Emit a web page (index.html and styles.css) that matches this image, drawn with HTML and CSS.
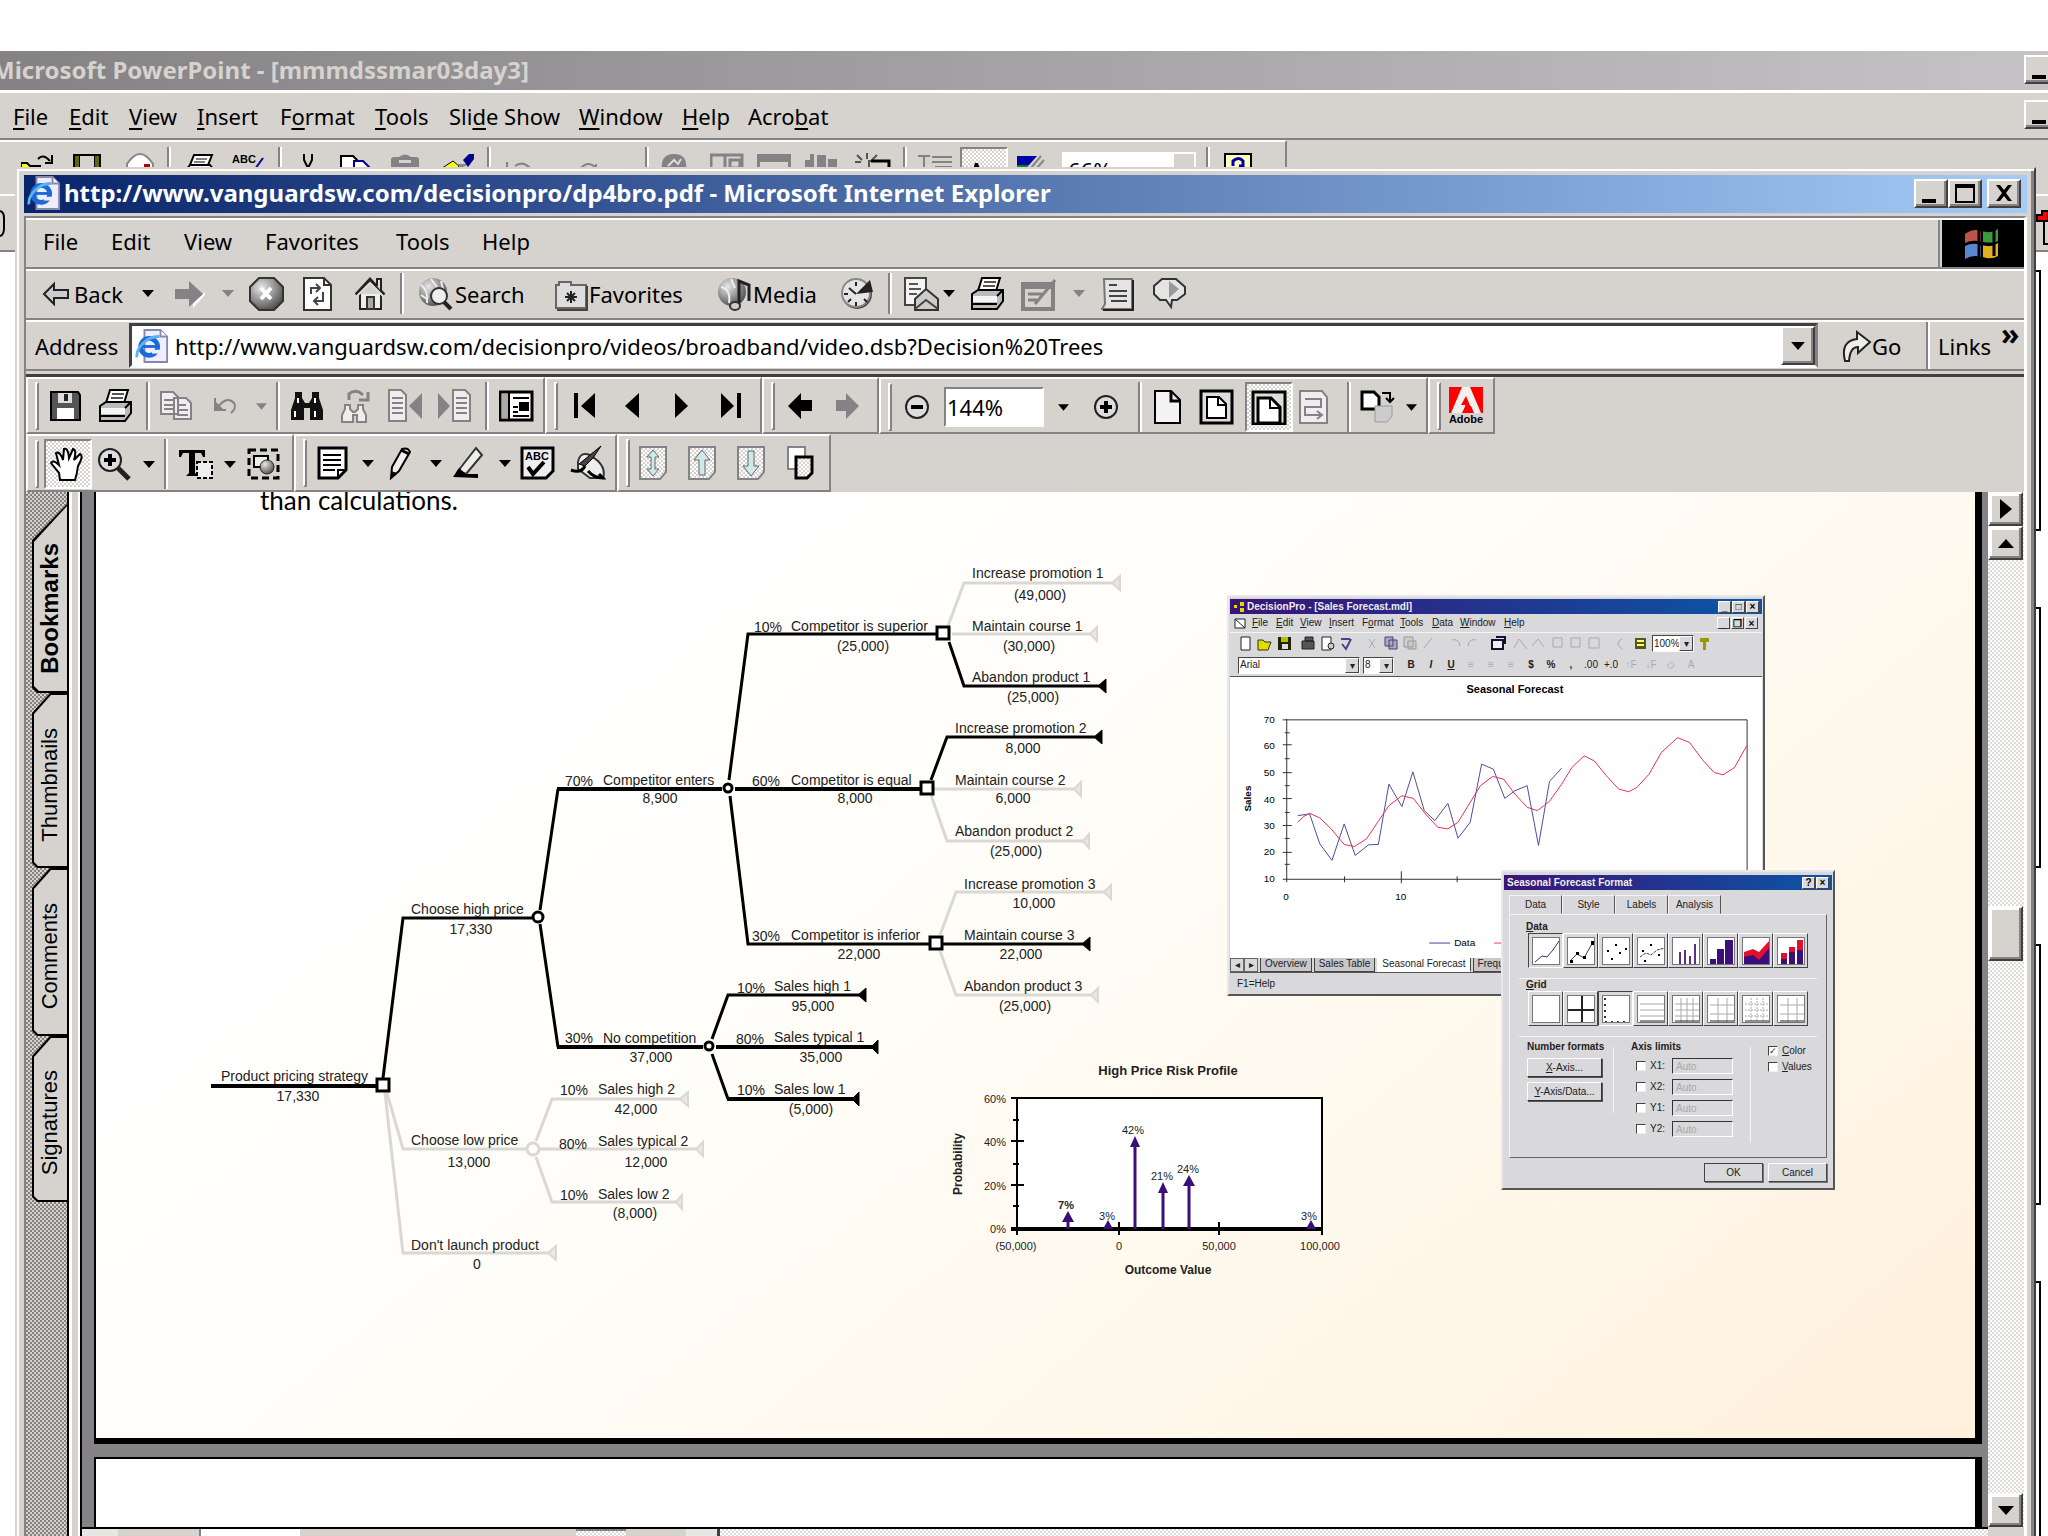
FILE: index.html
```html
<!DOCTYPE html>
<html lang="en">
<head>
<meta charset="utf-8">
<title>Desktop</title>
<link rel="stylesheet" href="styles.css">
</head>
<body>
<svg width="0" height="0" class="defs" aria-hidden="true">
<defs>
<linearGradient id="g" x1="0" y1="0" x2="1" y2="1"><stop offset="0" stop-color="#fff"/><stop offset="1" stop-color="#777"/></linearGradient>
<radialGradient id="ball" cx=".35" cy=".3" r=".8"><stop offset="0" stop-color="#e8e8e8"/><stop offset="1" stop-color="#444"/></radialGradient>
<pattern id="dots" width="4" height="4" patternUnits="userSpaceOnUse"><rect width="4" height="4" fill="#fff"/><path d="M0 0h2v2H0zM2 2h2v2H2z" fill="#d6d3ce"/></pattern>
<symbol id="caret" viewBox="0 0 12 7"><path d="M0 0h12L6 7z" fill="currentColor"/></symbol>
<symbol id="printer" viewBox="0 0 35 34"><path d="M12 1h18l-4 13H8z" fill="#fff" stroke="#000" stroke-width="2"/><path d="M14 5h12M13 9h12" stroke="#555" stroke-width="2"/><path d="M2 17l6-4h25v11l-6 8H2z" fill="#bbb" stroke="#000" stroke-width="2"/><path d="M3 19h24v6H3z" fill="#f4f4f4"/><path d="M2 27h25M27 19l6-6" stroke="#000" stroke-width="2"/></symbol>
<symbol id="ie" viewBox="0 0 34 36"><path d="M9 1h17l7 7v27H9z" fill="#eef" stroke="#88a" stroke-width="2"/><path d="M26 1v7h7" fill="#fff" stroke="#88a" stroke-width="2"/><circle cx="14" cy="19" r="9" fill="none" stroke="#1a6ad8" stroke-width="5"/><path d="M7 20h17v-3H7z" fill="#1a6ad8"/><path d="M17 22h9v4h-9z" fill="#eef"/><path d="M1 30C0 20 12 7 25 8" fill="none" stroke="#5bb4f0" stroke-width="3"/></symbol>
</defs>
</svg>

<main class="ppt">
  <header class="ppt-title"><h1>Microsoft PowerPoint - [mmmdssmar03day3]</h1><button class="win-btn" aria-label="Minimize"><span class="g-min"></span></button></header>
  <nav class="ppt-menu">
    <a href="#"><u>F</u>ile</a><a href="#"><u>E</u>dit</a><a href="#"><u>V</u>iew</a><a href="#"><u>I</u>nsert</a><a href="#">F<u>o</u>rmat</a><a href="#"><u>T</u>ools</a><a href="#">Sli<u>d</u>e Show</a><a href="#"><u>W</u>indow</a><a href="#"><u>H</u>elp</a><a href="#">Acro<u>b</u>at</a>
    <button class="win-btn" aria-label="Minimize document"><span class="g-min"></span></button>
  </nav>
  <div class="ppt-tools">
    <button aria-label="Open"><svg width="32" height="18"><path d="M0 17v-6h6l3 3h10v4" fill="#ff0" stroke="#000" stroke-width="2"/><path d="M17 7q5-6 12 2M31 3v8h-7" fill="none" stroke="#000" stroke-width="2"/></svg></button>
    <button aria-label="Save"><svg width="32" height="18"><path d="M1 2h28v16H1z" fill="#000"/><path d="M3 4h4v14H3zM23 4h4v14h-4z" fill="#660"/><path d="M8 4h14v12H8z" fill="#d6d3ce"/></svg></button>
    <button aria-label="Mail"><svg width="30" height="18"><path d="M1 18V12Q14-8 27 12v6" fill="#fff" stroke="#888" stroke-width="2"/><path d="M18 12h6v6h-6z" fill="#b00"/></svg></button>
    <i class="vsep"></i>
    <button aria-label="Print"><svg width="30" height="18"><path d="M8 3h18l-4 10H4zM0 18l4-5h20l4 5" fill="#fff" stroke="#000" stroke-width="2"/><path d="M10 7h11M8 10h11" stroke="#000"/></svg></button>
    <button aria-label="Spelling"><svg width="34" height="18"><text x="0" y="11" class="abc">ABC</text><path d="M23 17l8-11" stroke="#00a" stroke-width="2"/></svg></button>
    <i class="vsep"></i>
    <button aria-label="Cut"><svg width="14" height="18"><path d="M2 2v6l4 8 4-8V2" fill="none" stroke="#000" stroke-width="2"/></svg></button>
    <button aria-label="Copy"><svg width="32" height="18"><path d="M1 18V4h12l4 4v10" fill="#fff" stroke="#000" stroke-width="2"/><path d="M14 18V9h9l6 6v3" fill="#fff" stroke="#008" stroke-width="2"/></svg></button>
    <button aria-label="Paste" disabled><svg width="32" height="18"><path d="M1 18V8q0-3 3-3h5q6-5 12 0h5q3 0 3 3v10z" fill="#848284"/><path d="M9 8h12v3H9z" fill="#d6d3ce"/></svg></button>
    <button aria-label="Format painter"><svg width="36" height="18"><path d="M0 18l14-9 6 5-3 4z" fill="#ff0" stroke="#000"/><path d="M18 12l4 4 8-4z" fill="#888"/><path d="M24 8l6-6h5v5l-6 8z" fill="#008"/></svg></button>
    <i class="vsep"></i>
    <button aria-label="Undo" disabled><svg width="30" height="18"><path d="M2 10v8h8M10 14q8-6 16 3" fill="none" stroke="#848284" stroke-width="2"/></svg></button>
    <button aria-label="Redo" disabled><svg width="30" height="18"><path d="M2 17q8-9 15-2M18 12v6h8" fill="none" stroke="#848284" stroke-width="2"/></svg></button>
    <i class="vsep"></i>
    <button aria-label="Hyperlink" disabled><svg width="30" height="18"><path d="M2 18Q0 2 14 2t12 16z" fill="#848284"/><path d="M8 14l6-6 4 4 3-5" stroke="#ddd" stroke-width="2" fill="none"/></svg></button>
    <button aria-label="Tables" disabled><svg width="34" height="18"><path d="M1 18V3h31v15M15 3v15M20 8h10v8H20z" fill="none" stroke="#848284" stroke-width="3"/></svg></button>
    <button aria-label="Insert table" disabled><svg width="36" height="18"><path d="M0 2h34v8H0zM0 10h3v8H0zM31 10h3v8h-3z" fill="#848284"/></svg></button>
    <button aria-label="Chart" disabled><svg width="34" height="18"><path d="M0 8h5V2h4v16H0zM12 3h9v15h-9zM23 7h9v11h-9z" fill="#848284"/></svg></button>
    <button aria-label="New slide"><svg width="36" height="18"><path d="M2 3l5 5M12 1v6M22 3l-5 5M0 10h6M14 17V9h20v9" fill="none" stroke="#555" stroke-width="2"/><path d="M16 9h18v9" fill="none" stroke="#000" stroke-width="3"/></svg></button>
    <i class="vsep"></i>
    <button aria-label="Outline" disabled><svg width="36" height="18"><path d="M0 4h12M6 4v14M14 5h20M14 10h20M17 15h17" stroke="#848284" stroke-width="2"/></svg></button>
    <button class="pressed" aria-label="Formatting"><svg width="34" height="18"><path d="M2 18L7 2h3l5 16h-3l-1-5H6l-1 5z"/><path d="M18 17l7-8M26 10h6v8h-6z" stroke="#008" stroke-width="2" fill="#008"/></svg></button>
    <button aria-label="Grayscale"><svg width="30" height="18"><path d="M0 4h20l-8 9H0z" fill="#00a"/><path d="M0 13h12l-4 5H0z" fill="#080"/><path d="M14 16l10-12M19 17l8-9" stroke="#888" stroke-width="2"/></svg></button>
    <label class="ppt-zoom"><input type="text" value="66%" aria-label="Zoom"></label>
    <i class="vsep"></i>
    <button aria-label="Help"><svg width="30" height="18"><path d="M1 18V2h26v16z" fill="#ffb" stroke="#000" stroke-width="2"/><path d="M9 14V9q6-5 10 0v5h-4" fill="none" stroke="#00a" stroke-width="3"/></svg></button>
  </div>
  <div class="ppt-ruler">
    <svg width="6" height="28"><path d="M0 1q4 1 4 7v10q0 7-4 8" fill="none" stroke="#000" stroke-width="2"/></svg>
    <svg width="12" height="36"><path d="M1 5h5V1h6v10H1z" fill="#f00" stroke="#000" stroke-width="2"/><path d="M8 12v22h4" fill="none" stroke="#000" stroke-width="2"/></svg>
  </div>
  <div class="ppt-slides"><div class="slide"></div><div class="slide"></div><div class="slide"></div><div class="slide"></div></div>
</main>

<section class="ie">
  <header class="ie-title"><svg width="34" height="34"><use href="#ie"/></svg><h2>http://www.vanguardsw.com/decisionpro/dp4bro.pdf - Microsoft Internet Explorer</h2>
    <button class="win-btn" aria-label="Minimize"><span class="g-min"></span></button><button class="win-btn" aria-label="Maximize"><span class="g-max"></span></button><button class="win-btn close" aria-label="Close"><svg width="18" height="18"><path d="M1 1h4l4 5 4-5h4l-6 8 6 8h-4l-4-5-4 5H1l6-8z"/></svg></button>
  </header>
  <div class="ie-body">
    <div class="ie-menurow">
      <nav class="ie-menu"><a href="#">File</a><a href="#">Edit</a><a href="#">View</a><a href="#">Favorites</a><a href="#">Tools</a><a href="#">Help</a></nav>
      <div class="throbber"><svg width="44" height="40"><g><path d="M4 10q8-6 16-3v11q-8-3-16 1z" fill="#c0524c"/><path d="M22 7q8 3 15-2v12q-7 4-15 1z" fill="#3a9c3a"/><path d="M4 22q8-4 16-1v12q-8-3-16 2z" fill="#5a88d0"/><path d="M22 21q8 3 15-2v13q-7 4-15 1z" fill="#e0b020"/></g><path d="M18 6h15v26M18 6v28M18 20h15" fill="none" stroke="#000" stroke-width="3"/></svg></div>
    </div>

    <div class="ie-tools">
      <button class="first"><svg width="28" height="26"><path d="M2 13L12 3v6h14v8H12v6z" fill="#ccc" stroke="#222" stroke-width="2"/></svg>Back</button>
      <button aria-label="Back list"><svg width="12" height="7"><use href="#caret"/></svg></button>
      <button aria-label="Forward" disabled><svg width="30" height="30"><path d="M18 29l12-13v-3L18 24z" fill="#fff"/><path d="M0 10h14V2l14 13-14 13v-8H0z" fill="#848284"/></svg></button>
      <button aria-label="Forward list" disabled><svg width="12" height="7"><use href="#caret"/></svg></button>
      <button aria-label="Stop"><svg width="36" height="34"><path d="M10 1h15l9 9v14l-9 9H10l-9-9V10z" fill="url(#ball)" stroke="#333" stroke-width="2"/><path d="M12 11l10 11M22 11L12 22" stroke="#fff" stroke-width="4"/></svg></button>
      <button aria-label="Refresh"><svg width="30" height="34"><path d="M1 1h20l7 7v25H1z" fill="#fff" stroke="#333" stroke-width="2"/><path d="M21 1v7h7" fill="none" stroke="#333" stroke-width="2"/><path d="M8 17v-6h8M13 7l4 4-4 4M20 15v9h-8M15 20l-4 4 4 4" fill="none" stroke="#444" stroke-width="2"/></svg></button>
      <button aria-label="Home"><svg width="32" height="34"><path d="M5 17v15h21V17" fill="#eee" stroke="#222" stroke-width="2"/><path d="M1 18L15 3l14 15" fill="none" stroke="#222" stroke-width="4"/><path d="M1 20L15 6l14 14" fill="none" stroke="#ddd" stroke-width="2"/><path d="M22 9V2h4v12" fill="#ddd" stroke="#222" stroke-width="2"/><path d="M12 32V20h7v12z" fill="#aaa" stroke="#333" stroke-width="2"/></svg></button>
      <i class="vsep"></i>
      <button><svg width="38" height="34"><circle cx="16" cy="15" r="14" fill="url(#ball)"/><path d="M4 8q8 6 6 18M14 2l6 8M24 4l2 8M4 18l6 4" stroke="#eee" stroke-width="2" fill="none"/><circle cx="22" cy="19" r="8" fill="#eee" stroke="#333" stroke-width="2"/><path d="M27 25l7 7" stroke="#222" stroke-width="4"/></svg>Search</button>
      <button><svg width="35" height="34"><path d="M2 8h3V5h12v3h15v23H2z" fill="#ddd" stroke="#666" stroke-width="2"/><path d="M33 9v24H3" fill="none" stroke="#444" stroke-width="2"/><path d="M17 14v12M11 20h12M13 16l8 8M21 16l-8 8" stroke="#222" stroke-width="2"/></svg>Favorites</button>
      <button><svg width="36" height="34"><circle cx="15" cy="15" r="14" fill="url(#ball)"/><path d="M4 10q10 2 8 16M14 2l4 9" stroke="#eee" stroke-width="2" fill="none"/><path d="M22 29V4l10 4v16" fill="none" stroke="#222" stroke-width="3"/><ellipse cx="18" cy="29" rx="5" ry="4" fill="#ccc" stroke="#333" stroke-width="2"/></svg>Media</button>
      <button aria-label="History"><svg width="36" height="34"><circle cx="17" cy="17" r="15" fill="#444"/><circle cx="16" cy="16" r="14" fill="#e4e4e4" stroke="#888" stroke-width="2"/><path d="M16 17L30 3l3 12z" fill="#222"/><path d="M16 17l-7-6M16 5v4M16 25v4M4 17h4M24 22l3 3M8 25l3-3" stroke="#222" stroke-width="2"/></svg></button>
      <i class="vsep"></i>
      <button aria-label="Mail"><svg width="36" height="34"><path d="M1 1h21v27H1z" fill="#f4f4f4" stroke="#444" stroke-width="2"/><path d="M5 7h9M5 12h12M5 17h8" stroke="#555" stroke-width="2"/><path d="M11 22L22 12l12 10v11H11z" fill="#ccc" stroke="#333" stroke-width="2"/><path d="M11 32l11-9 12 9" fill="none" stroke="#444" stroke-width="2"/></svg></button>
      <button aria-label="Mail list"><svg width="12" height="7"><use href="#caret"/></svg></button>
      <button aria-label="Print"><svg width="35" height="34"><use href="#printer"/></svg></button>
      <button aria-label="Edit" disabled><svg width="36" height="34"><path d="M2 7h30v25H2z" fill="none" stroke="#848284" stroke-width="4"/><path d="M2 5h30v7H2z" fill="#848284"/><path d="M7 17h14M7 23h9M14 27L34 3" stroke="#848284" stroke-width="3"/></svg></button>
      <button aria-label="Edit list" disabled><svg width="12" height="7"><use href="#caret"/></svg></button>
      <button aria-label="Discuss"><svg width="36" height="34"><path d="M3 2h28v30H1l3-5z" fill="#e4e4e4" stroke="#777" stroke-width="2"/><path d="M32 3v30H2" fill="none" stroke="#222" stroke-width="2"/><path d="M8 8h8M8 14h18M8 19h18M10 24h16" stroke="#444" stroke-width="2"/></svg></button>
      <button aria-label="Messenger"><svg width="36" height="34"><path d="M10 2h14l9 8v7l-8 6h-5l-1 7-5-7h-6l-6-6v-8z" fill="#e4e4e4" stroke="#333" stroke-width="2"/><path d="M17 4v17l10-9z" fill="#999"/></svg></button>
    </div>

    <form class="ie-address">
      <label for="url">Address</label>
      <div class="combo"><svg width="34" height="34"><use href="#ie"/></svg><input id="url" type="text" value="http://www.vanguardsw.com/decisionpro/videos/broadband/video.dsb?Decision%20Trees"><button type="button" class="drop" aria-label="Show addresses"><svg width="14" height="8"><use href="#caret"/></svg></button></div>
      <button type="button" class="go"><svg width="30" height="34"><path d="M3 32Q-2 12 15 10V3l13 10-12 11v-6Q8 18 7 32z" fill="#eee" stroke="#222" stroke-width="2"/></svg>Go</button>
      <button type="button" class="links">Links<b>»</b></button>
    </form>

    <div class="acro">
      <div class="acro-row">
        <div class="grp g1"><i class="grip"></i>
          <button aria-label="Save"><svg width="32" height="32"><path d="M1 2h27l2 3v25H1z" fill="#555" stroke="#000" stroke-width="2"/><path d="M8 3h14v10H8z" fill="#ddd"/><path d="M14 4h4v7h-4z" fill="#222"/><path d="M7 18h17v11H7z" fill="#fff"/></svg></button>
          <button aria-label="Print"><svg width="35" height="34"><use href="#printer"/></svg></button>
          <i class="vsep"></i>
          <button aria-label="Copy" disabled><svg width="34" height="30"><path d="M1 1h12l5 5v17H1zM14 7h12l5 5v16H14z" fill="#eee" stroke="#848284" stroke-width="2"/><path d="M4 9h9M4 14h9M4 18h9M17 14h9M17 19h11M17 24h11" stroke="#848284" stroke-width="2"/></svg></button>
          <button aria-label="Undo" disabled><svg width="26" height="24"><path d="M2 4v12h11M4 14Q14 1 21 9q3 5-3 10" fill="none" stroke="#848284" stroke-width="2"/><path d="M1 6v11h11z" fill="#848284"/></svg></button>
          <button aria-label="Undo list" disabled><svg width="11" height="7"><use href="#caret"/></svg></button>
          <i class="vsep"></i>
          <button aria-label="Find"><svg width="34" height="32"><path d="M5 8V2h7v6l3 5h4l3-5V2h7v6l4 12v10H20V18h-6v12H1V20z" fill="#111"/><path d="M5 21v6M25 21v6M8 8v5M25 8v5" stroke="#fff" stroke-width="2"/></svg></button>
          <button aria-label="Find again" disabled><svg width="30" height="34"><path d="M4 20v-4h5v4l3 3h2l3-3v-4h5v4l3 6v7h-9v-7h-4v7H1v-7z" fill="#eee" stroke="#848284" stroke-width="2"/><path d="M8 11V5q7-6 14 1M27 3v8h-9" fill="none" stroke="#848284" stroke-width="3"/></svg></button>
          <button aria-label="Previous highlight" disabled><svg width="35" height="34"><path d="M1 1h12l5 5v26H1z" fill="#eee" stroke="#848284" stroke-width="2"/><path d="M4 9h11M4 14h11M4 19h11M4 24h11" stroke="#848284" stroke-width="2"/><path d="M34 4v26L21 17z" fill="#848284"/></svg></button>
          <button aria-label="Next highlight" disabled><svg width="35" height="34"><path d="M16 1h12l5 5v26H16z" fill="#eee" stroke="#848284" stroke-width="2"/><path d="M19 9h11M19 14h11M19 19h11M19 24h11" stroke="#848284" stroke-width="2"/><path d="M1 4v26l12-13z" fill="#848284"/></svg></button>
          <i class="vsep"></i>
          <button aria-label="Navigation pane"><svg width="35" height="32"><path d="M1 2h32v28H1z" fill="#fff" stroke="#000" stroke-width="3"/><path d="M3 4h6v24H3z" fill="#aaa"/><path d="M10 3v26M14 8h16M14 17h5M14 22h5M14 26h16" stroke="#000" stroke-width="2"/><path d="M20 12h10v9H20z"/></svg></button>
        </div>
        <div class="grp g2"><i class="grip"></i>
          <button aria-label="First page"><svg width="24" height="28"><path d="M1 1h4v25H1zM22 1v25L8 14z"/></svg></button>
          <button aria-label="Previous page"><svg width="16" height="28"><path d="M14 1v25L0 14z"/></svg></button>
          <button aria-label="Next page"><svg width="16" height="28"><path d="M1 1v25l13-12z"/></svg></button>
          <button aria-label="Last page"><svg width="24" height="28"><path d="M1 1v25l13-12zM17 1h4v25h-4z"/></svg></button>
        </div>
        <div class="grp g3"><i class="grip"></i>
          <button aria-label="Previous view"><svg width="26" height="28"><path d="M25 8v11H14v8L1 14 14 1v7z"/></svg></button>
          <button aria-label="Next view" disabled><svg width="26" height="28"><path d="M1 8v11h10v8l13-13L11 1v7z" fill="#848284"/></svg></button>
        </div>
        <div class="grp g4"><i class="grip"></i>
          <button aria-label="Zoom out"><svg width="28" height="28"><circle cx="13" cy="14" r="11" fill="#ddd" stroke="#222" stroke-width="2"/><path d="M7 12h12v4H7z"/></svg></button>
          <input class="zoom" type="text" value="144%" aria-label="Zoom">
          <button aria-label="Zoom levels"><svg width="11" height="7"><use href="#caret"/></svg></button>
          <button aria-label="Zoom in"><svg width="28" height="28"><circle cx="13" cy="14" r="11" fill="#ddd" stroke="#222" stroke-width="2"/><path d="M7 12h12v4H7zM11 8h4v12h-4z"/></svg></button>
          <i class="vsep"></i>
          <button aria-label="Actual size"><svg width="30" height="36"><path d="M2 2h16l9 9v23H2z" fill="#f4f4f4" stroke="#000" stroke-width="2"/><path d="M18 2v10h9" fill="none" stroke="#000" stroke-width="3"/></svg></button>
          <button aria-label="Fit in window"><svg width="36" height="36"><path d="M2 2h31v32H2z" fill="#ddd" stroke="#000" stroke-width="3"/><path d="M8 8h12l7 7v14H8z" fill="#fff" stroke="#000" stroke-width="2"/><path d="M19 8v8h8" fill="none" stroke="#000" stroke-width="2"/></svg></button>
          <button class="pressed" aria-label="Fit width"><svg width="36" height="36"><path d="M2 3h32v32H2z" fill="#ddd" stroke="#000" stroke-width="3"/><path d="M7 34V9h13l9 9v16z" fill="#fff" stroke="#000" stroke-width="3"/><path d="M19 9v10h10" fill="none" stroke="#000" stroke-width="2"/></svg></button>
          <button aria-label="Reflow" disabled><svg width="32" height="36"><path d="M1 2h22l5 6v26H1z" fill="#eee" stroke="#848284" stroke-width="2"/><path d="M6 10h16v8H6v8h16M18 22l5 4-5 4" fill="none" stroke="#848284" stroke-width="2"/></svg></button>
          <i class="vsep"></i>
          <button aria-label="Rotate"><svg width="36" height="34"><path d="M2 2h12l5 5v12H2z" fill="#fff" stroke="#000" stroke-width="3"/><path d="M15 16h17v10l-5 6H15z" fill="#ccc" stroke="#999"/><path d="M22 3h8v8M26 8l4 4 4-4" fill="none" stroke="#000" stroke-width="2"/></svg></button>
          <button aria-label="Rotate list"><svg width="11" height="7"><use href="#caret"/></svg></button>
        </div>
        <div class="grp g5"><i class="grip"></i>
          <button class="adobe" aria-label="Adobe on the web"><svg width="34" height="26"><path d="M0 0h34v26H0z" fill="#f00"/><path d="M13 0h8l11 26h-7l-3-7h-6l4-8-7 15H2z" fill="#f2f0ec"/><path d="M17 9l6 14h-5l-2-5h-4z" fill="#f00"/></svg><span>Adobe</span></button>
        </div>
      </div>
      <div class="acro-row second">
        <div class="grp h1"><i class="grip"></i>
          <button class="pressed" aria-label="Hand"><svg width="36" height="36"><path d="M10 34L9 27 1 17q2-4 8 2L6 7q4-2 7 7l1-11q4-2 5 9l4-9q4 1 1 11l6-6q4 2-2 12-1 8-3 14z" fill="#fff" stroke="#000" stroke-width="2"/></svg></button>
          <button aria-label="Zoom"><svg width="36" height="34"><circle cx="13" cy="13" r="11" fill="#ddd" stroke="#222" stroke-width="2"/><path d="M7 11h12v4H7zM11 7h4v12h-4z"/><path d="M21 21l11 11" stroke="#222" stroke-width="5"/></svg></button>
          <button aria-label="Zoom list"><svg width="12" height="7"><use href="#caret"/></svg></button>
          <i class="vsep"></i>
          <button aria-label="Select text"><svg width="36" height="32"><path d="M1 2h26v7h-2l-2-4h-6v20l3 3H8l3-3V5H5L3 9H1z"/><path d="M19 14h15v16H19z" fill="#eee" stroke="#000" stroke-width="2" stroke-dasharray="4 2"/></svg></button>
          <button aria-label="Select list"><svg width="12" height="7"><use href="#caret"/></svg></button>
          <button aria-label="Snapshot"><svg width="34" height="32"><path d="M2 2h29v28H2z" fill="none" stroke="#000" stroke-width="3" stroke-dasharray="7 4"/><path d="M7 8h14v11H7z" fill="#eee" stroke="#000" stroke-width="2"/><circle cx="20" cy="19" r="7" fill="url(#ball)" stroke="#222"/></svg></button>
        </div>
        <div class="grp h2"><i class="grip"></i>
          <button aria-label="Note"><svg width="32" height="34"><path d="M2 2h27v22l-8 8H2z" fill="#fff" stroke="#000" stroke-width="3"/><path d="M6 9h18M6 14h18M6 19h18M6 24h12M29 24h-8v8" fill="none" stroke="#000" stroke-width="2"/></svg></button>
          <button aria-label="Note list"><svg width="12" height="7"><use href="#caret"/></svg></button>
          <button aria-label="Pencil"><svg width="24" height="34"><path d="M3 21L13 3q6-2 8 3L10 25l-8 7z" fill="#eee" stroke="#000" stroke-width="2"/><path d="M2 25v7l6-5z"/><path d="M12 4l8 4" stroke="#000" stroke-width="3"/></svg></button>
          <button aria-label="Pencil list"><svg width="12" height="7"><use href="#caret"/></svg></button>
          <button aria-label="Highlighter"><svg width="34" height="34"><path d="M6 25L24 2l6 7-16 19z" fill="#eee" stroke="#333" stroke-width="2"/><path d="M1 31l6-9 7 6h12v4z"/></svg></button>
          <button aria-label="Highlighter list"><svg width="12" height="7"><use href="#caret"/></svg></button>
          <button aria-label="Spelling"><svg width="36" height="34"><path d="M2 2h31v23l-7 7H2z" fill="#eee" stroke="#000" stroke-width="3"/><text x="5" y="14" class="abc">ABC</text><path d="M8 21l5 7L24 16" fill="none" stroke="#000" stroke-width="4"/></svg></button>
          <button aria-label="Sign"><svg width="36" height="36"><path d="M8 17Q10 6 20 10l8 6q8 8 5 17H20L8 24z" fill="#eee" stroke="#333" stroke-width="2"/><path d="M9 19L31 1l-8 12-8 8z" fill="#444" stroke="#000"/><path d="M1 25q10 4 14-4M18 26q6 7 15 7l-4-4" fill="none" stroke="#000" stroke-width="3"/></svg></button>
        </div>
        <div class="grp h3"><i class="grip"></i>
          <button aria-label="Fit height" disabled><svg width="29" height="34"><path d="M1 1h26v25l-6 7H1z" fill="url(#dots)" stroke="#848284" stroke-width="2"/><path d="M14 4l6 7h-4v12h4l-6 7-6-7h4V11H8z" fill="#cfe8ec" stroke="#666"/></svg></button>
          <button aria-label="Page up" disabled><svg width="29" height="34"><path d="M1 1h26v25l-6 7H1z" fill="url(#dots)" stroke="#848284" stroke-width="2"/><path d="M14 4l8 10h-5v15h-6V14H6z" fill="#cfe8ec" stroke="#666"/></svg></button>
          <button aria-label="Page down" disabled><svg width="29" height="34"><path d="M1 1h26v25l-6 7H1z" fill="url(#dots)" stroke="#848284" stroke-width="2"/><path d="M14 30l8-10h-5V5h-6v15H6z" fill="#cfe8ec" stroke="#666"/></svg></button>
          <button aria-label="Pages"><svg width="29" height="34"><path d="M1 1h17v22H1z" fill="#fff" stroke="#848284" stroke-width="2"/><path d="M9 11h16v16l-5 5H9z" fill="url(#dots)" stroke="#000" stroke-width="3"/></svg></button>
        </div>
      </div>
    </div>

    <div class="viewer">
      <div class="navtabs">
        <button class="tab t1"><span>Bookmarks</span></button><button class="tab t2"><span>Thumbnails</span></button><button class="tab t3"><span>Comments</span></button><button class="tab t4"><span>Signatures</span></button>
      </div>
      <div class="splitter"></div>
      <div class="doc">
        <div class="page">
          <svg class="canvas" width="1879" height="946" viewBox="96 492 1879 946">
            <text class="prose" x="260" y="510">than calculations.</text>
            <g class="off">
              <path d="M948 626L964 583H1112M952 634H1090M934 789H1075M931 795L947 841H1083M940 935L956 892H1104M940 951L956 995H1092M387 1093L403 1149H526M536 1141L552 1099H681M540 1149H697M536 1157L552 1202H676M385 1093L403 1253H549"/>
              <path class="tri" d="M1112 583l8-7v14zM1090 634l7-7v14zM1074 789l7-7v14zM1083 841l6-7v14zM1104 892l7-7v14zM1091 995l7-7v14zM680 1099l8-7v14zM696 1149l7-7v14zM676 1202l6-7v14zM548 1253l8-7v14z"/>
              <circle cx="533" cy="1149" r="6"/>
            </g>
            <g class="on">
              <path d="M383 1078L403 918H532M540 910L558 789M540 924L558 1047M729 780L748 634H937M949 642L964 686H1100M931 780L947 737H1095M730 796L748 944H930M943 944H1083M712 1039L728 995H860M712 1054L728 1099"/>
              <path class="thick" d="M211 1086H377M557 789H722M735 789H920M557 1047H703M716 1047H874M727 1099H854"/>
              <path class="tri" d="M1098 686l8-7v14zM1094 737l8-7v14zM1082 944l8-7v14zM858 995l8-7v14zM871 1047l7-7v14zM852 1099l7-7v14z"/>
              <path class="box" d="M377 1079h12v12h-12zM937 627h12v12h-12zM921 782h12v12h-12zM930 937h12v12h-12z"/>
              <circle cx="538" cy="917" r="5"/><circle cx="728" cy="788" r="4"/><circle cx="709" cy="1046" r="4"/>
            </g>
            <g class="lbl">
              <text x="221" y="1081">Product pricing strategy</text><text x="411" y="914">Choose high price</text><text x="411" y="1145">Choose low price</text><text x="411" y="1250">Don't launch product</text>
              <text x="565" y="786">70%</text><text x="603" y="785">Competitor enters</text><text x="565" y="1043">30%</text><text x="603" y="1043">No competition</text>
              <text x="754" y="632">10%</text><text x="791" y="631">Competitor is superior</text><text x="752" y="786">60%</text><text x="791" y="785">Competitor is equal</text><text x="752" y="941">30%</text><text x="791" y="940">Competitor is inferior</text>
              <text x="972" y="578">Increase promotion 1</text><text x="972" y="631">Maintain course 1</text><text x="972" y="682">Abandon product 1</text>
              <text x="955" y="733">Increase promotion 2</text><text x="955" y="785">Maintain course 2</text><text x="955" y="836">Abandon product 2</text>
              <text x="964" y="889">Increase promotion 3</text><text x="964" y="940">Maintain course 3</text><text x="964" y="991">Abandon product 3</text>
              <text x="737" y="993">10%</text><text x="774" y="991">Sales high 1</text><text x="736" y="1044">80%</text><text x="774" y="1042">Sales typical 1</text><text x="737" y="1095">10%</text><text x="774" y="1094">Sales low 1</text>
              <text x="560" y="1095">10%</text><text x="598" y="1094">Sales high 2</text><text x="559" y="1149">80%</text><text x="598" y="1146">Sales typical 2</text><text x="560" y="1200">10%</text><text x="598" y="1199">Sales low 2</text>
            </g>
            <g class="lbl mid">
              <text x="298" y="1101">17,330</text><text x="471" y="934">17,330</text><text x="469" y="1167">13,000</text><text x="477" y="1269">0</text>
              <text x="660" y="803">8,900</text><text x="651" y="1062">37,000</text><text x="863" y="651">(25,000)</text><text x="855" y="803">8,000</text><text x="859" y="959">22,000</text>
              <text x="1040" y="600">(49,000)</text><text x="1029" y="651">(30,000)</text><text x="1033" y="702">(25,000)</text><text x="1023" y="753">8,000</text><text x="1013" y="803">6,000</text><text x="1016" y="856">(25,000)</text><text x="1034" y="908">10,000</text><text x="1021" y="959">22,000</text><text x="1025" y="1011">(25,000)</text>
              <text x="813" y="1011">95,000</text><text x="821" y="1062">35,000</text><text x="811" y="1114">(5,000)</text><text x="636" y="1114">42,000</text><text x="646" y="1167">12,000</text><text x="635" y="1218">(8,000)</text>
            </g>
            <g class="risk">
              <path d="M1017 1098H1322V1229H1017z" fill="#fff" stroke="#000" stroke-width="2"/>
              <path d="M1011 1229H1322" stroke="#000" stroke-width="4"/>
              <path d="M1011 1098h6M1011 1141h13M1011 1185h13M1013 1120h6M1013 1164h6M1013 1206h6M1017 1229v6M1119 1222v13M1219 1222v13M1322 1229v6" stroke="#000" stroke-width="2"/>
              <path d="M1068 1229v-12M1135 1229v-88M1163 1229v-40M1189 1229v-48" stroke="#3a0f7a" stroke-width="3"/>
              <path d="M1068 1211l6 11h-12zM1108 1220l5 9h-10zM1135 1136l5 11h-10zM1163 1182l5 11h-10zM1189 1175l6 11h-12zM1311 1220l5 9h-10z" fill="#3a0f7a"/>
              <text class="hd" x="1168" y="1075">High Price Risk Profile</text><text class="hd sm" x="1168" y="1274">Outcome Value</text><text class="hd sm" transform="translate(962 1164) rotate(-90)">Probability</text>
              <text class="end" x="1006" y="1103">60%</text><text class="end" x="1006" y="1146">40%</text><text class="end" x="1006" y="1190">20%</text><text class="end" x="1006" y="1233">0%</text>
              <text x="1016" y="1250">(50,000)</text><text x="1119" y="1250">0</text><text x="1219" y="1250">50,000</text><text x="1320" y="1250">100,000</text>
              <text class="b" x="1066" y="1209">7%</text><text x="1107" y="1220">3%</text><text x="1133" y="1134">42%</text><text x="1162" y="1180">21%</text><text x="1188" y="1173">24%</text><text x="1309" y="1220">3%</text>
            </g>
          </svg>

          <section class="app">
            <header class="mini-title"><svg width="14" height="12"><path d="M1 4h3v3H1zM7 1h4v4H7zM7 7h4v4H7z" fill="#dd0"/></svg><b>DecisionPro - [Sales Forecast.mdl]</b><button aria-label="Minimize">_</button><button aria-label="Maximize">□</button><button aria-label="Close">×</button></header>
            <nav class="app-menu"><svg width="12" height="11"><path d="M1 1h10v9H1zM1 1l10 9" fill="#fff" stroke="#222"/></svg><a href="#"><u>F</u>ile</a><a href="#"><u>E</u>dit</a><a href="#"><u>V</u>iew</a><a href="#"><u>I</u>nsert</a><a href="#">F<u>o</u>rmat</a><a href="#"><u>T</u>ools</a><a href="#"><u>D</u>ata</a><a href="#"><u>W</u>indow</a><a href="#"><u>H</u>elp</a><button aria-label="Minimize">_</button><button aria-label="Restore">❐</button><button aria-label="Close">×</button></nav>
            <div class="app-tools">
              <svg width="516" height="20" class="ticons">
                <path d="M11 3h9v13h-9z" fill="#fff" stroke="#222"/><path d="M28 6h5l2 2h6l-3 8H28z" fill="#dd0" stroke="#330"/><path d="M48 3h13v13H48z" fill="#220"/><path d="M51 3h7v5h-7z" fill="#bb0"/><path d="M52 10h6v5h-6z" fill="#ddd"/>
                <path d="M72 7h12v8H72zM75 3h8v4h-8z" fill="#555" stroke="#222"/><path d="M92 3h9v13h-9z" fill="#fff" stroke="#222"/><circle cx="101" cy="12" r="3" fill="#ccc" stroke="#222"/><path d="M111 5h9M112 10l4 5 5-10" stroke="#448" stroke-width="2" fill="none"/>
                <path d="M155 3h8v9h-8zM159 6h8v9h-8z" fill="#aac" stroke="#446"/><path d="M174 3h9v10h-9zM178 7h8v8h-8z" fill="#ccc" stroke="#999"/><path d="M139 5l6 9m0-9l-6 9M194 14l8-10M222 6q7-2 8 6M246 6q-7-2-8 6M284 14l5-9 8 10M302 12l6-7 6 8M323 4h9v9h-9zM341 4h9v9h-9zM359 4h10v10h-10zM392 5q-8 4 0 10" fill="none" stroke="#aaa"/>
                <path d="M262 6h11v9h-11zM266 3h9v7" fill="#eee" stroke="#113" stroke-width="2"/><path d="M405 4h11v11h-11z" fill="#552"/><path d="M407 6h7v2h-7zM407 10h7v2h-7z" fill="#ff6"/><path d="M470 4h9v4h-3v8h-3V8h-3z" fill="#990"/>
              </svg>
              <label class="mini-select zoomsel"><select aria-label="Zoom"><option>100%</option></select></label>
            </div>
            <div class="app-tools fmt">
              <label class="mini-select font"><select aria-label="Font"><option>Arial</option></select></label><label class="mini-select size"><select aria-label="Size"><option>8</option></select></label>
              <button><b>B</b></button><button><b><i>I</i></b></button><button><b><u>U</u></b></button><button class="dim">≡</button><button class="dim">≡</button><button class="dim">≡</button><button><b>$</b></button><button><b>%</b></button><button><b>,</b></button><button>.00</button><button>+.0</button><button class="dim">↑F</button><button class="dim">↓F</button><button class="dim">◇</button><button class="dim">A</button>
            </div>
            <svg class="chart" width="532" height="282" viewBox="1231 679 532 282">
              <text class="t" x="1516" y="695">Seasonal Forecast</text>
              <path d="M1287 721V885M1283 722H1749V900M1283 882H1749M1283 747h9M1283 775h9M1283 801h9M1283 828h9M1283 855h9M1285 735h5M1285 761h5M1285 788h5M1285 815h5M1285 841h5M1285 867h5M1345 879v6M1402 874v12M1458 879v6" fill="none" stroke="#333"/>
              <g class="ax"><text x="1275" y="725">70</text><text x="1275" y="751">60</text><text x="1275" y="778">50</text><text x="1275" y="805">40</text><text x="1275" y="832">30</text><text x="1275" y="858">20</text><text x="1275" y="885">10</text><text x="1289" y="903">0</text><text x="1407" y="903">10</text></g>
              <text class="sales" transform="translate(1251 801) rotate(-90)">Sales</text>
              <g transform="translate(1210 580) scale(.408 .333)" class="plot">
                <polyline class="blue" points="216,715 245,710 270,800 300,850 330,740 357,835 390,803 414,802 440,620 472,688 499,583 527,700 553,730 585,678 610,783 640,735 668,560 697,575 725,663 750,640 780,625 808,805 835,612 865,572"/>
                <polyline class="red" points="216,735 230,718 245,708 270,722 298,755 330,802 355,808 385,785 415,730 440,685 472,655 500,663 530,710 560,750 585,755 610,735 640,675 665,625 695,597 722,605 750,650 780,690 805,700 835,672 865,620 890,570 920,535 945,550 975,595 1005,635 1030,643 1050,630 1080,590 1110,525 1150,480 1180,495 1210,545 1240,585 1262,592 1290,570 1320,505"/>
              </g>
              <path d="M1430 946h21" stroke="#44449a"/><path d="M1495 946h12" stroke="#e04060"/><text x="1455" y="949">Data</text>
            </svg>
            <div class="sheets"><button aria-label="Scroll left">◂</button><button aria-label="Scroll right">▸</button><a href="#">Overview</a><a href="#">Sales Table</a><a href="#" class="cur">Seasonal Forecast</a><a href="#">Frequency</a></div>
            <footer>F1=Help</footer>
          </section>

          <section class="dialog">
            <header class="mini-title"><b>Seasonal Forecast Format</b><button aria-label="Help">?</button><button aria-label="Close">×</button></header>
            <div class="dtabs"><button>Data</button><button class="cur">Style</button><button>Labels</button><button>Analysis</button></div>
            <div class="panel">
              <fieldset class="wide"><legend><u>D</u>ata</legend><div class="tiles">
                <button class="sel" aria-label="Line"><svg width="28" height="28"><path d="M2 24l7-6 5 1 6-7 6-9" fill="none" stroke="#336"/></svg></button>
                <button aria-label="Line and marks"><svg width="28" height="28"><path d="M2 23l7-7 7 4 9-16" fill="none" stroke="#336"/><path d="M2 22h3v3H2zM8 14h3v3H8zM15 18h3v3h-3zM23 3h4v4h-4z"/></svg></button>
                <button aria-label="Scatter"><svg width="28" height="28"><path d="M4 12h2v2H4zM12 6h2v2h-2zM8 20h2v2H8zM16 14h2v2h-2zM22 10h2v2h-2z"/></svg></button>
                <button aria-label="Scatter with trend"><svg width="28" height="28"><path d="M2 19l6-4 5 2 6-5 8-2" fill="none" stroke="#337" stroke-dasharray="3 1"/><path d="M4 12h2v2H4zM12 6h2v2h-2zM6 22h2v2H6zM20 16h2v2h-2z"/></svg></button>
                <button aria-label="Stems"><svg width="28" height="28"><path d="M7 26V14M12 26V12M17 26v-8M22 26V6" stroke="#538" stroke-width="2"/></svg></button>
                <button aria-label="Bars"><svg width="28" height="28"><path d="M2 26v-5h6v5zM9 26V11h7v15zM17 26V2h8v24z" fill="#3a0f7a"/></svg></button>
                <button aria-label="Area"><svg width="28" height="28"><path d="M1 14l9-3 6 3L27 2v24H1z" fill="#e01030"/><path d="M1 19l9-2 6 5L27 9v17H1z" fill="#3a0f7a"/></svg></button>
                <button aria-label="Stacked bars"><svg width="28" height="28"><path d="M3 26V15h6v11zM11 26V9h6v17zM19 26V2h6v24z" fill="#e01030"/><path d="M3 26v-5h6v5zM11 26V14h6v12zM19 26V12h6v14z" fill="#3a0f7a"/></svg></button>
              </div></fieldset>
              <fieldset class="wide"><legend><u>G</u>rid</legend><div class="tiles">
                <button aria-label="No axes"><svg width="28" height="28"></svg></button>
                <button aria-label="Cross axes"><svg width="28" height="28"><path d="M14 0v28M0 14h28" stroke="#222" stroke-width="2"/></svg></button>
                <button class="sel" aria-label="Axes"><svg width="28" height="28"><path d="M2 2v24h24" fill="none" stroke="#333" stroke-width="2" stroke-dasharray="2 4"/></svg></button>
                <button aria-label="Rows"><svg width="28" height="28"><path d="M2 8h24M2 14h24M2 20h24" stroke="#aaa"/><path d="M2 25h24" stroke="#222"/></svg></button>
                <button aria-label="Grid 1"><svg width="28" height="28"><path d="M2 8h24M2 14h24M2 20h24M8 2v24M14 2v24M20 2v24" stroke="#aaa"/><path d="M2 25h24" stroke="#222"/></svg></button>
                <button aria-label="Grid 2"><svg width="28" height="28"><path d="M2 9h24M2 18h24M10 2v24M19 2v24" stroke="#aaa"/><path d="M2 25h24" stroke="#222"/></svg></button>
                <button aria-label="Grid 3"><svg width="28" height="28"><path d="M2 8h24M2 14h24M2 20h24M8 2v24M14 2v24M20 2v24" stroke="#aaa" stroke-dasharray="2 1"/><path d="M2 25h24" stroke="#222"/></svg></button>
                <button aria-label="Grid 4"><svg width="28" height="28"><path d="M2 9h24M2 18h24M10 2v24M19 2v24" stroke="#aaa"/><path d="M2 25h24" stroke="#222"/></svg></button>
              </div></fieldset>
              <div class="cols">
                <fieldset class="nums"><legend>Number formats</legend><button><u>X</u>-Axis...</button><button><u>Y</u>-Axis/Data...</button></fieldset>
                <fieldset class="limits"><legend>Axis limits</legend>
                  <div><label><input type="checkbox">X1:</label><input type="text" value="Auto" aria-label="X1 limit" disabled></div>
                  <div><label><input type="checkbox">X2:</label><input type="text" value="Auto" aria-label="X2 limit" disabled></div>
                  <div><label><input type="checkbox">Y1:</label><input type="text" value="Auto" aria-label="Y1 limit" disabled></div>
                  <div><label><input type="checkbox">Y2:</label><input type="text" value="Auto" aria-label="Y2 limit" disabled></div>
                </fieldset>
                <div class="opts"><label><input type="checkbox" checked><span><u>C</u>olor</span></label><label><input type="checkbox"><span><u>V</u>alues</span></label></div>
              </div>
            </div>
            <div class="dbtns"><button class="default">OK</button><button>Cancel</button></div>
          </section>
        </div>
        <div class="page next"></div>
        <div class="pagebar"><i class="p1"></i><i class="p2"></i><i class="p3"></i><i class="p4"></i><i class="p5"></i><i class="p6"></i><i class="p7"></i></div>
      </div>
      <div class="vscroll"><button aria-label="Menu"><svg width="12" height="20"><path d="M0 0v20l12-10z"/></svg></button><button aria-label="Up"><svg width="16" height="9"><path d="M0 9h16L8 0z"/></svg></button><div class="track"><div class="thumb"></div></div><button aria-label="Down"><svg width="16" height="9"><path d="M0 0h16L8 9z"/></svg></button></div>
    </div>
  </div>
</section>
</body>
</html>
```
FILE: styles.css
```css
* { box-sizing: border-box; }
:root { --face: #d6d3ce; --dark: #848284; --ui: "Noto Sans", "Open Sans", sans-serif; --arial: "Liberation Sans", Arial, sans-serif; }
body { margin: 0; height: 100vh; overflow: hidden; position: relative; background: #fff; font: 22px/30px var(--ui); color: #000; }
button { border: 0; padding: 0; margin: 0; background: none; font: inherit; color: inherit; }
a { color: inherit; text-decoration: none; }
h1, h2 { margin: 0; font-size: 24px; line-height: 30px; white-space: nowrap; }
svg { display: block; flex: none; }
input, select { font: inherit; color: inherit; border: 0; margin: 0; padding: 0; border-radius: 0; min-width: 0; }
.defs { position: absolute; }
.abc { font: bold 11px var(--arial); }
button:disabled { color: var(--dark); }
.vsep { width: 4px; align-self: stretch; border-left: 2px solid var(--dark); border-right: 2px solid #fff; }

/* window caption buttons */
.win-btn { width: 34px; height: 29px; flex: none; background: var(--face); border: 2px solid; border-color: #fff #404040 #404040 #fff; box-shadow: inset -2px -2px var(--dark); display: flex; align-items: center; justify-content: center; }
.g-min { width: 14px; height: 4px; background: #000; align-self: flex-end; margin: 0 4px 3px 0; }
.g-max { width: 20px; height: 19px; border: 2px solid #000; border-top-width: 4px; }

/* PowerPoint behind */
.ppt { height: 100%; padding-top: 51px; }
.ppt-title { height: 39px; padding-bottom: 2px; display: flex; align-items: center; justify-content: space-between; overflow: hidden; background: linear-gradient(90deg, #848284, #c6c3c6); color: #d6d3ce; }
.ppt-title h1 { margin-left: -8px; }
.ppt-title .win-btn { margin-right: -10px; }
.ppt-menu { height: 50px; padding-left: 13px; border-top: 3px solid #fff; border-bottom: 2px solid var(--dark); background: var(--face); display: grid; grid-template-columns: 56px 60px 68px 83px 95px 74px 130px 103px 66px 1fr 24px; align-items: center; }
.ppt-menu u { text-underline-offset: 3px; }
.ppt-menu .win-btn { align-self: start; margin-top: 7px; }
.ppt-tools { height: 54px; width: 1287px; padding: 5px 0 0 21px; border-top: 2px solid #fff; border-right: 2px solid var(--dark); background: var(--face); display: grid; grid-template-columns: 51px 54px 41px 19px 46px 46px 24px 38px 50px 49px 48px 18px 73px 67px 15px 50px 47px 48px 50px 48px 15px 42px 57px 45px 144px 18px 1fr; align-items: start; box-shadow: 900px 0 var(--face); }
.ppt-tools button { padding-top: 5px; }
.ppt-tools .pressed { width: 48px; height: 40px; padding: 5px 0 0 6px; background: repeating-conic-gradient(#fff 0 25%, var(--face) 0 50%) 0 0 / 4px 4px; border: 2px solid; border-color: var(--dark) #fff #fff var(--dark); }
.ppt-zoom { width: 134px; margin-top: 5px; border: 2px solid #fff; background: var(--face); display: flex; height: 36px; }
.ppt-zoom input { width: 110px; background: #fff; padding-left: 4px; }
.ppt-ruler { height: 58px; padding-top: 14px; background: var(--face); border-top: 2px solid #fff; border-bottom: 2px solid var(--dark); display: flex; justify-content: space-between; }
.ppt-slides { padding-top: 18px; display: flex; flex-direction: column; align-items: flex-end; gap: 76px; }
.slide { width: 60px; height: 261px; flex: none; margin-right: 7px; border: 2px solid #000; border-left: 0; }

/* Internet Explorer */
.ie { position: absolute; inset: 167px 12px 0 15px; padding: 6px 7px 0; background: var(--face); border: 2px solid; border-bottom: 0; border-color: var(--face) #404040 var(--face) var(--face); box-shadow: inset 2px 2px #fff, inset -3px 0 var(--dark); display: flex; flex-direction: column; }
.ie-title { height: 38px; flex: none; padding: 0 6px 2px 3px; display: flex; align-items: center; background: linear-gradient(90deg, #08246b, #a5cbf7); color: #fff; }
.ie-title h2 { flex: 1; margin-left: 3px; }
.ie-title .close { margin-left: 5px; }
.ie-body { flex: 1; min-height: 0; margin-top: 3px; border: 2px solid; border-width: 2px 3px 0 2px; border-color: var(--dark) #fff var(--dark) var(--dark); display: flex; flex-direction: column; }
.ie-menurow { height: 51px; flex: none; display: flex; border-top: 2px solid #fff; border-bottom: 2px solid var(--dark); }
.ie-menu { flex: 1; padding: 0 0 6px 17px; display: grid; grid-template-columns: 68px 73px 81px 131px 86px 1fr; align-items: center; border-right: 2px solid var(--dark); }
.throbber { width: 82px; margin-left: 2px; background: #000; display: flex; align-items: center; justify-content: center; }
.ie-tools { height: 51px; flex: none; padding: 2px 0 4px 16px; border-top: 2px solid #fff; border-bottom: 2px solid var(--dark); display: grid; grid-template-columns: 100px 33px 47px 27px 54px 52px 45px 17px 137px 163px 123px 48px 16px 39px 27px 51px 52px 28px 51px 1fr; align-items: center; }
.ie-tools button { display: flex; align-items: center; }
.ie-tools .first { gap: 4px; }
.ie-address { height: 51px; flex: none; margin: 0; border-top: 2px solid #fff; border-bottom: 2px solid var(--dark); display: flex; align-items: center; }
.ie-address > label { width: 103px; padding-left: 9px; }
.combo { flex: 1; height: 45px; padding-left: 3px; background: #fff; border: 3px solid; border-color: #404040 var(--dark) #fff #404040; display: flex; align-items: center; }
.combo input { flex: 1; height: 38px; margin-left: 6px; }
.drop { width: 34px; height: 39px; background: var(--face); border: 2px solid; border-color: #fff #404040 #404040 #fff; box-shadow: inset -2px -2px var(--dark); display: flex; align-items: center; justify-content: center; }
.go { width: 106px; height: 47px; margin-left: 4px; padding-left: 20px; border-right: 2px solid var(--dark); display: flex; align-items: center; }
.links { width: 96px; height: 47px; padding-left: 8px; border-left: 2px solid #fff; display: flex; align-items: center; gap: 10px; }
.links b { font-size: 30px; align-self: flex-start; line-height: 24px; }

/* Acrobat toolbars */
.acro { flex: none; margin-top: 3px; border-top: 3px solid #404040; }
.acro-row { display: flex; height: 57px; }
.acro-row.second { height: 58px; }
.grp { display: grid; align-items: center; padding: 3px 0 3px 7px; border: 2px solid; border-color: #fff var(--dark) var(--dark) #fff; }
.grip { width: 4px; height: 48px; border: 2px solid; border-color: #fff var(--dark) var(--dark) #fff; }
.grp button { display: flex; align-items: center; }
.g1 { width: 519px; grid-template-columns: 15px 48px 48px 14px 53px 43px 20px 14px 51px 47px 49px 48px 14px 1fr; }
.g2 { width: 217px; grid-template-columns: 19px 52px 49px 46px 1fr; }
.g3 { width: 117px; grid-template-columns: 16px 48px 1fr; }
.g4 { width: 549px; grid-template-columns: 16px 40px 114px 35px 45px 15px 46px 46px 54px 48px 13px 46px 1fr; }
.g5 { width: 67px; grid-template-columns: 12px 1fr; }
.h1 { width: 268px; grid-template-columns: 9px 53px 46px 21px 14px 46px 23px 1fr; }
.h2 { width: 323px; grid-template-columns: 14px 45px 27px 41px 22px 47px 21px 50px 1fr; }
.h3 { width: 214px; grid-template-columns: 13px 49px 49px 50px 1fr; }
.grp .pressed { width: 48px; height: 50px; justify-content: center; background: repeating-conic-gradient(#fff 0 25%, var(--face) 0 50%) 0 0 / 4px 4px; border: 2px solid; border-color: var(--dark) #fff #fff var(--dark); }
.zoom { width: 100px; height: 40px; padding-left: 1px; background: #fff; border: 2px solid; border-color: var(--dark) #fff #fff var(--dark); }
.grp .adobe { flex-direction: column; width: 34px; font: bold 11px/13px var(--arial); }

/* document viewer */
.viewer { flex: 1; min-height: 0; display: flex; }
.navtabs { width: 43px; padding: 12px 0 0 6px; border-right: 2px solid #000; background: repeating-conic-gradient(#848284 0 25%, #d6d3ce 0 50%) 0 0 / 4px 4px; }
.tab { position: relative; display: flex; align-items: center; justify-content: center; width: 35px; background: #000; font: 22px/28px var(--arial); clip-path: polygon(0 20px, 18px 0, 100% 0, 100% 100%, 5px 100%, 0 calc(100% - 5px)); }
.tab::before { content: ""; position: absolute; inset: 2px 0 2px 2px; background: var(--face); clip-path: polygon(0 19px, 17px 0, 100% 0, 100% 100%, 4px 100%, 0 calc(100% - 4px)); }
.tab span { position: relative; writing-mode: vertical-rl; transform: rotate(180deg); }
.t1 { height: 189px; padding-top: 20px; font-weight: bold; font-size: 24px; }
.t1, .t1::before { clip-path: polygon(0 36px, 100% 0, 100% 100%, 5px 100%, 0 calc(100% - 5px)); }
.t2 { height: 175px; padding-top: 8px; }
.t3 { height: 168px; padding-top: 8px; }
.t4 { height: 166px; padding-top: 8px; }
.splitter { width: 11px; background: var(--face); border: solid #fff; border-width: 0 2px 0 3px; }
.doc { flex: 1; min-width: 0; padding: 0 6px 0 12px; border-left: 2px solid #000; background: var(--dark); display: flex; flex-direction: column; overflow: hidden; }
.page { position: relative; flex: none; border: solid #000; border-width: 0 7px 6px 2px; background: linear-gradient(140deg, #fff 22%, #fffdf8 45%, #fff9ee 65%, #fff5e6 82%, #fff0da); overflow: hidden; }
.page.next { flex: 1; margin-top: 13px; border-top-width: 2px; border-bottom: 0; background: #fff; }
.prose { font: 26px Lato, sans-serif; }
.on path { fill: none; stroke: #000; stroke-width: 3; }
.on .thick { stroke-width: 4; }
.on .tri { fill: #000; stroke-width: 1; }
.on .box, .on circle { fill: #fff; stroke: #000; stroke-width: 3; }
.off path { fill: none; stroke: #dbd8d4; stroke-width: 3; }
.off .tri { stroke-width: 2; fill: #eae7e2; }
.off circle { fill: #fff; stroke: #dbd8d4; stroke-width: 3; }
.lbl { font: 14px var(--arial); fill: #222; }
.mid { text-anchor: middle; }
.risk { font: 11px var(--arial); text-anchor: middle; fill: #222; }
.risk .hd { font-weight: bold; font-size: 13px; }
.risk .sm { font-size: 12px; }
.risk .b { font-weight: bold; }
.risk .end { text-anchor: end; }

/* pictured application windows, placed on the brochure page */
.app, .dialog { position: absolute; background: #d9d8da; border: 2px solid; border-color: #e8e8ea #555 #555 #e8e8ea; font: 10px/12px var(--arial); color: #222; display: flex; flex-direction: column; }
.app { left: 1131px; top: 103px; width: 538px; height: 401px; padding: 2px 1px 0; }
.mini-title { height: 15px; flex: none; display: flex; align-items: center; padding: 0 3px; color: #eee; background: linear-gradient(90deg, #3a1478, #0a56a6); }
.mini-title b { flex: 1; }
.mini-title button, .app-menu button { width: 13px; height: 12px; margin-left: 1px; background: #d9d8da; color: #000; border: 1px solid; border-color: #fff #444 #444 #fff; font: bold 10px/9px var(--arial); }
.app-menu { height: 18px; flex: none; padding-left: 4px; display: grid; grid-template-columns: 18px 24px 24px 29px 33px 38px 32px 28px 44px 1fr 14px 14px 18px; align-items: center; }
.app-tools { height: 22px; flex: none; display: flex; align-items: center; position: relative; border-top: 1px solid #f4f4f4; }
.mini-select { height: 17px; background: #fff; border: 1px solid; border-color: #444 #fff #fff #444; display: flex; }
.mini-select select { flex: 1; background: #fff; font-size: 10px; appearance: none; padding-left: 1px; }
.mini-select::after { content: "▾"; width: 12px; flex: none; background: #d9d8da; text-align: center; border: 1px solid; border-color: #fff #444 #444 #fff; line-height: 13px; }
.zoomsel { width: 42px; position: absolute; left: 422px; }
.fmt { padding-left: 8px; border-top: 0; }
.fmt button { width: 20px; text-align: center; }
.fmt button.dim { color: #aaa; }
.font { width: 122px; }
.size { width: 31px; margin: 0 7px 0 3px; }
.chart { background: #fff; border-top: 1px solid #555; font: 10px var(--arial); }
.chart .t { font-weight: bold; text-anchor: middle; font-size: 11px; }
.chart .sales { font-weight: bold; text-anchor: middle; }
.ax { text-anchor: end; }
.plot polyline { fill: none; stroke-width: 1px; vector-effect: non-scaling-stroke; }
.blue { stroke: #4c4ca0; }
.red { stroke: #e83058; }
.sheets { height: 15px; flex: none; display: flex; border-bottom: 1px solid #555; overflow: hidden; }
.sheets button { width: 14px; border: 1px solid #666; line-height: 10px; }
.sheets a { padding: 0 4px; border: 1px solid #444; border-top: 0; margin-left: 2px; background: #c8c7ca; }
.sheets .cur { background: #fff; border-color: #fff #444 #fff #fff; }
.app footer { padding: 5px 7px; }

.dialog { left: 1405px; top: 378px; width: 334px; height: 320px; padding: 3px 1px 0; }
.dtabs { display: flex; margin: 5px 0 0 5px; height: 19px; flex: none; }
.dtabs button { width: 53px; border: 1px solid; border-color: #f4f4f4 #555 transparent #f4f4f4; }
.panel { margin: 0 5px; height: 244px; flex: none; border: 1px solid; border-color: #f4f4f4 #666 #666 #f4f4f4; padding: 6px 9px 0; }
fieldset { margin: 0; padding: 0; border: 0; min-width: 0; }
legend { padding: 0; font-weight: bold; line-height: 12px; }
.wide { height: 58px; padding-left: 9px; border-bottom: 1px solid #f4f4f4; }
.wide legend { margin-left: -2px; }
.tiles { display: grid; grid-template-columns: repeat(8, 35px); }
.tiles button { height: 35px; padding: 2px; border: 1px solid; border-color: #fff #444 #444 #fff; }
.tiles .sel { border-color: #444 #fff #fff #444; }
.tiles svg { background: #fff; border: 1px solid #777; margin: 1px; }
.cols { display: grid; grid-template-columns: 95px 17px 120px 1fr; padding-top: 4px; }
.nums { height: 72px; border-right: 1px solid #f4f4f4; padding-left: 8px; }
.nums button { display: block; width: 75px; height: 19px; margin-top: 5px; border: 1px solid; border-color: #fff #333 #333 #fff; box-shadow: 1px 1px #555; }
.limits { grid-column: 3; height: 102px; border-right: 1px solid #f4f4f4; }
.limits div { display: flex; height: 16px; margin-top: 5px; align-items: center; }
.limits label { width: 41px; padding-left: 5px; display: flex; align-items: center; gap: 4px; }
input[type="checkbox"] { appearance: none; width: 10px; height: 10px; background: #fff; border: 1px solid; border-color: #444 #eee #eee #444; }
input[type="checkbox"]:checked::after { content: "✓"; display: block; font: bold 9px/8px "DejaVu Sans", sans-serif; }
.limits input[type="text"] { width: 61px; height: 16px; padding-left: 3px; background: #d9d8da; color: #aaa; border: 1px solid; border-color: #333 #fff #fff #333; }
.opts { padding: 2px 0 0 17px; }
.opts label { display: flex; align-items: center; gap: 4px; height: 16px; }
.dbtns { display: flex; justify-content: flex-end; gap: 5px; padding: 5px 5px 0 0; }
.dbtns button { width: 59px; height: 19px; border: 1px solid; border-color: #fff #444 #444 #fff; box-shadow: 1px 1px #777; }
.dbtns .default { border-color: #444; }

/* status strip under the pages */
.pagebar { flex: none; height: 9px; margin: 0 -6px 0 -12px; border-top: 2px solid #000; background: repeating-conic-gradient(#fff 0 25%, #dedcd8 0 50%) 0 0 / 4px 4px; display: grid; grid-template-columns: 119px 99px 276px 50px 60px 34px 1fr; }
.pagebar i { background: var(--face); }
.pagebar .p1 { border-right: 2px solid var(--dark); border-left: 36px solid #e8e6e2; }
.pagebar .p2 { background: #fff; }
.pagebar .p4 { background: none; border-top: 2px solid var(--dark); }
.pagebar .p6 { border-right: 3px solid #404040; background: #e8e6e2; }
.pagebar .p7 { background: none; }
.vscroll { width: 36px; flex: none; display: flex; flex-direction: column; background: repeating-conic-gradient(#fff 0 25%, #dedcd8 0 50%) 0 0 / 4px 4px; border-bottom: 9px solid var(--face); }
.vscroll button, .thumb { flex: none; width: 35px; height: 34px; background: var(--face); border: 2px solid; border-color: #fff #404040 #404040 #fff; box-shadow: inset -2px -2px var(--dark), inset 2px 2px #fff; display: flex; align-items: center; justify-content: center; }
.track { flex: 1; display: flex; flex-direction: column; }
.track::before { content: ""; flex: 37 0 0; }
.track::after { content: ""; flex: 57 0 0; }
.thumb { height: 55px; }
```
